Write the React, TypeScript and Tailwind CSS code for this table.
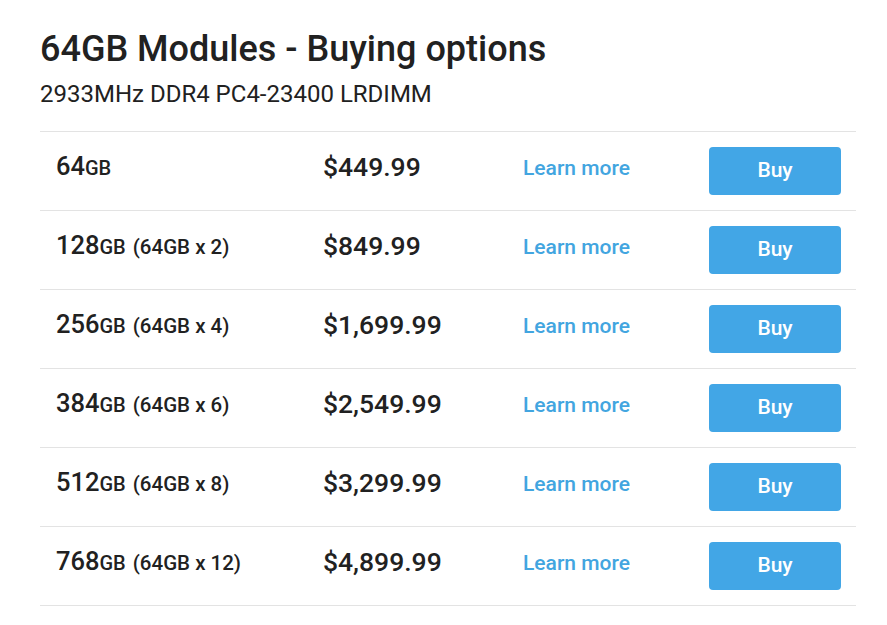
const rows = [
  { size: "64", note: "", price: "$449.99" },
  { size: "128", note: "(64GB x 2)", price: "$849.99" },
  { size: "256", note: "(64GB x 4)", price: "$1,699.99" },
  { size: "384", note: "(64GB x 6)", price: "$2,549.99" },
  { size: "512", note: "(64GB x 8)", price: "$3,299.99" },
  { size: "768", note: "(64GB x 12)", price: "$4,899.99" },
];

export default function App() {
  return (
    <div className="min-h-screen bg-white px-10 pt-[28px] font-['Roboto',sans-serif] text-[#212121]">
      <h1 className="text-[36px] leading-[42px] font-medium">
        64GB Modules - Buying options
      </h1>
      <p className="mt-[10px] text-[24px] leading-[28px]">
        2933MHz DDR4 PC4-23400 LRDIMM
      </p>

      <div className="mt-[23px] w-[816px] border-t border-[#e3e3e3]">
        {rows.map((r) => (
          <div
            key={r.size}
            className="grid h-[79px] grid-cols-[267px_200px_186px_132px] items-center border-b border-[#e3e3e3] pl-4"
          >
            <div className="pb-[9px] font-medium">
              <span className="text-[25.5px]">{r.size}</span>
              <span className="text-[20px]">GB</span>
              {r.note && (
                <span className="ml-[7px] text-[20.5px]">{r.note}</span>
              )}
            </div>
            <div className="pb-[9px] text-[26.5px] font-medium">{r.price}</div>
            <div className="pb-[4px]">
              <a href="#" className="text-[21px] font-medium text-[#42a5e0]">
                Learn more
              </a>
            </div>
            <button
              type="button"
              className="h-[48px] w-[132px] rounded-[4px] bg-[#42a6e6] text-[21px] font-medium text-white"
            >
              Buy
            </button>
          </div>
        ))}
      </div>
    </div>
  );
}
